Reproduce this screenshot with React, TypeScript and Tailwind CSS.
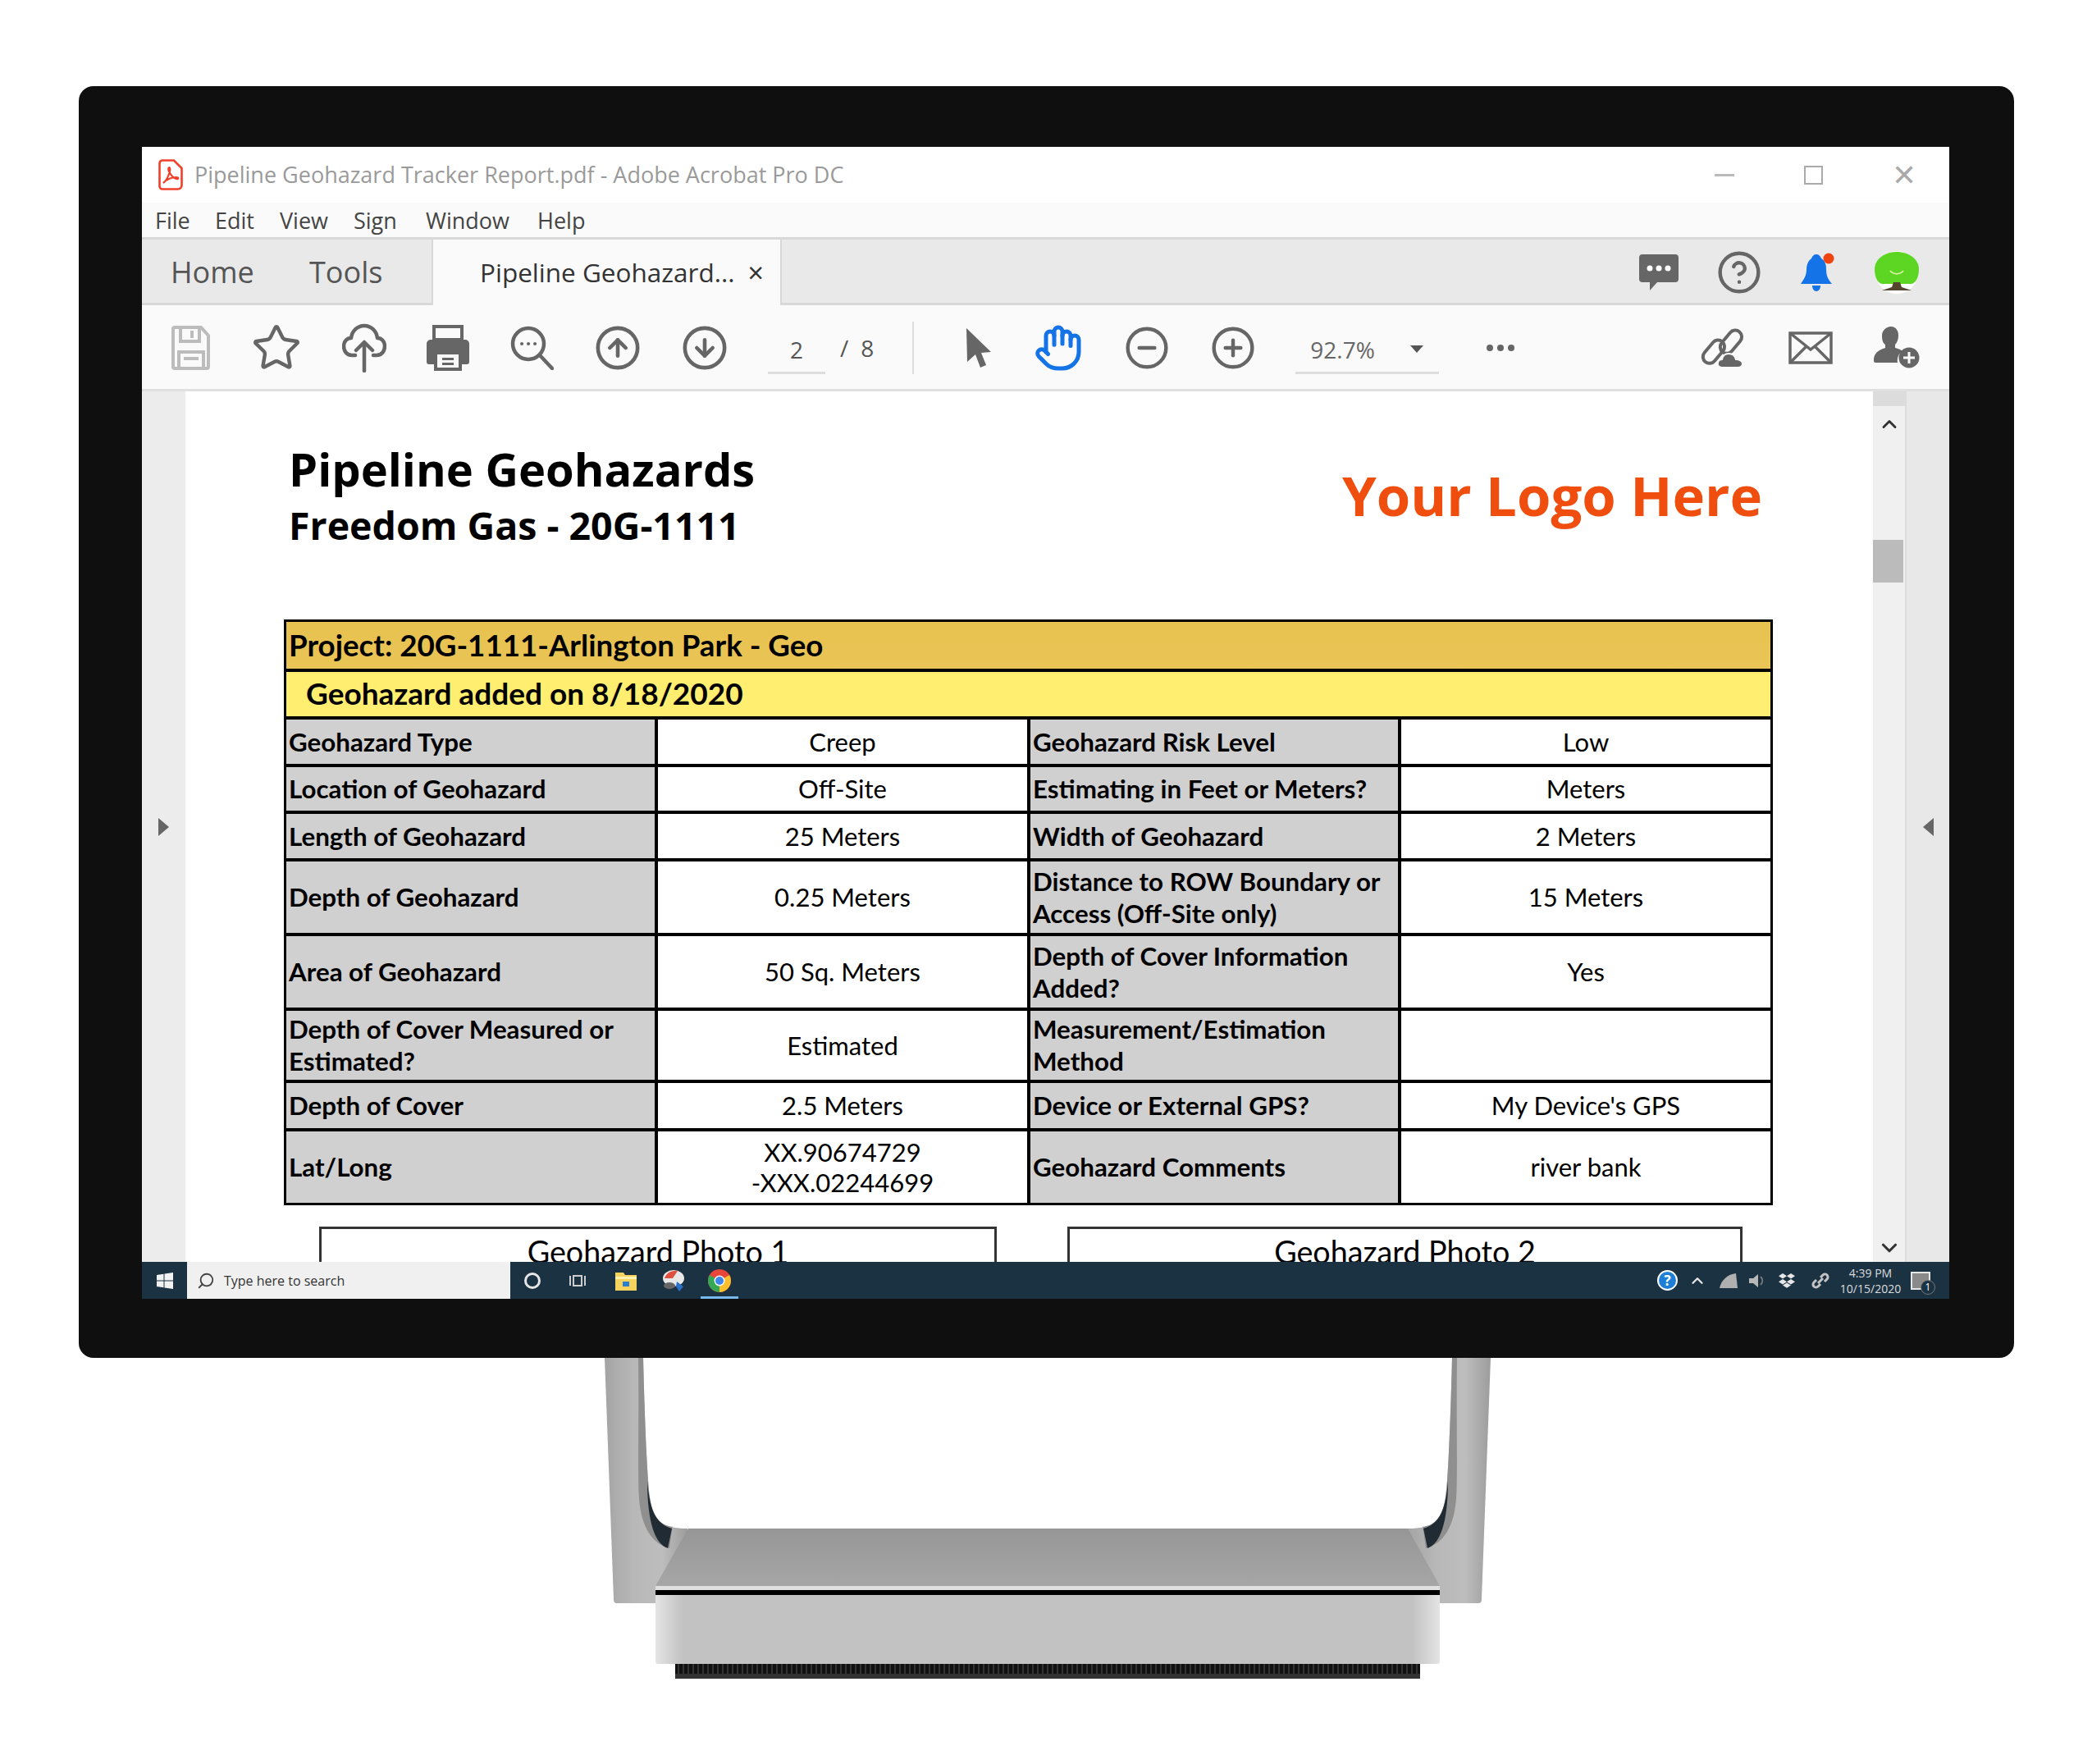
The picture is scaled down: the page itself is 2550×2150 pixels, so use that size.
import React from "react";
import { CircleArrowDown, CircleArrowUp, CircleHelp, CircleMinus, CirclePlus, Hand, Star, ChevronUp, ChevronDown, Search } from "lucide-react";

type Row = { a: string; b: string; c: string; d: string };

const rows: Row[] = [
  { a: "Geohazard Type", b: "Creep", c: "Geohazard Risk Level", d: "Low" },
  { a: "Location of Geohazard", b: "Off-Site", c: "Estimating in Feet or Meters?", d: "Meters" },
  { a: "Length of Geohazard", b: "25 Meters", c: "Width of Geohazard", d: "2 Meters" },
  { a: "Depth of Geohazard", b: "0.25 Meters", c: "Distance to ROW Boundary or\nAccess (Off-Site only)", d: "15 Meters" },
  { a: "Area of Geohazard", b: "50 Sq. Meters", c: "Depth of Cover Information\nAdded?", d: "Yes" },
  { a: "Depth of Cover Measured or\nEstimated?", b: "Estimated", c: "Measurement/Estimation\nMethod", d: "" },
  { a: "Depth of Cover", b: "2.5 Meters", c: "Device or External GPS?", d: "My Device's GPS" },
  { a: "Lat/Long", b: "XX.90674729\n-XXX.02244699", c: "Geohazard Comments", d: "river bank" },
];

const Label = ({ text }: { text: string }) => (
  <div className="flex items-center whitespace-pre-line bg-[#d0d0d0] pl-[3px] text-[31.300px] leading-[39px] font-bold text-black">{text}</div>
);

const Value = ({ text }: { text: string }) => (
  <div className="flex items-center justify-center whitespace-pre-line bg-white text-center text-[31px] leading-[37px] text-black">{text}</div>
);

const PdfLogo = () => (
  <svg width="30" height="38" viewBox="0 0 30 38" fill="none">
    <path d="M5 1.500h14l9.500 9.500V32a4.500 4.500 0 0 1-4.500 4.500H5A3.500 3.500 0 0 1 1.500 33V5A3.500 3.500 0 0 1 5 1.500z" stroke="#f0402a" strokeWidth="2.600" />
    <path d="M6 29c3-2 6-7 8-14 .6-3 .2-5-.8-5s-1.500 2.500-.2 5c2 4 5 8 9 9 3 .6 3-2 0-2-5 0-11 2-16 7z" stroke="#f0402a" strokeWidth="2.200" />
  </svg>
);

const SaveIcon = () => (
  <svg width="50" height="56" viewBox="0 0 50 56" fill="none" stroke="#bcbcbc" strokeWidth="4">
    <path d="M5 3h32l9 10v38a2 2 0 0 1-2 2H5a2 2 0 0 1-2-2V5a2 2 0 0 1 2-2z" />
    <path d="M12 3v17h23V3M26 7v9M10 53V33h30v20M16 41h18" />
  </svg>
);

const CloudIcon = () => (
  <svg width="54" height="60" viewBox="0 0 54 60" fill="none" stroke="#666" strokeWidth="4.500" strokeLinecap="round" strokeLinejoin="round">
    <path d="M16 39H12C5 39 2 33 2 28c0-6 4-10 9-10 1-9 8-15 16-15s15 6 16 15c5 0 9 4 9 10 0 5-3 11-10 11h-4" />
    <path d="M27 58V24M17 33l10-10 10 10" />
  </svg>
);

const PrintIcon = () => (
  <svg width="54" height="56" viewBox="0 0 54 56" fill="#666">
    <path d="M10 2h34v16H10z" fill="none" stroke="#666" strokeWidth="4" />
    <path d="M6 18h42a5 5 0 0 1 5 5v22a3 3 0 0 1-3 3h-6V32H10v16H4a3 3 0 0 1-3-3V23a5 5 0 0 1 5-5z" />
    <path d="M12 34h30v20H12z" fill="none" stroke="#666" strokeWidth="4" />
    <path d="M20 40h14v3H20zM20 46h14v3H20z" />
  </svg>
);

const ZoomIcon = () => (
  <svg width="54" height="54" viewBox="0 0 54 54" fill="none" stroke="#666" strokeWidth="4.500" strokeLinecap="round">
    <circle cx="23" cy="22" r="19" />
    <path d="M37 36l15 16" />
    <path d="M15 22h.1M23 22h.1M31 22h.1" strokeWidth="4" />
  </svg>
);

const ArrowCursor = () => (
  <svg width="34" height="50" viewBox="0 0 34 50" fill="#666">
    <path d="M2 1l30 29-12 1 6 15-7 3-6-16-10 9z" />
  </svg>
);

const LinkCloud = () => (
  <svg width="58" height="50" viewBox="0 0 58 50" fill="none" stroke="#666" strokeWidth="4">
    <rect x="-8" y="-19" width="16" height="32" rx="8" transform="translate(36 20) rotate(40)" />
    <rect x="-8" y="-19" width="16" height="32" rx="8" transform="translate(15 32) rotate(40)" />
    <path d="M27 49c-4 0-6-3-5-6 .5-3 3-4 5-4 1-5 4-7 8-7 5 0 8 3 9 7 4 0 8 2 8 5 0 3-2 5-6 5z" fill="#666" stroke="#fafafa" strokeWidth="2" />
  </svg>
);

const MailIcon = () => (
  <svg width="54" height="40" viewBox="0 0 54 40" fill="none" stroke="#666" strokeWidth="3.500">
    <rect x="2" y="2" width="50" height="36" />
    <path d="M2 2l25 20L52 2M2 38l20-20M52 38L32 18" />
  </svg>
);

const PersonPlus = () => (
  <svg width="56" height="52" viewBox="0 0 56 52" fill="#666">
    <path d="M21 0c6 0 9 5 9 11 0 5-2 9-4 11v4c4 1 7 2 9 4-5 3-7 8-6 14H2c-2 0-2-2-2-4 0-6 4-11 14-14v-4c-3-2-4-6-4-11C10 5 15 0 21 0z" />
    <circle cx="43" cy="38" r="12.500" />
    <path d="M41.500 31h3v5.500H50v3h-5.500V45h-3v-5.500H36v-3h5.500z" fill="#fff" />
  </svg>
);

const ChatIcon = () => (
  <svg width="50" height="46" viewBox="0 0 50 46" fill="#666">
    <path d="M5 1h40a4 4 0 0 1 4 4v26a4 4 0 0 1-4 4H23l-9 10v-10H5a4 4 0 0 1-4-4V5a4 4 0 0 1 4-4z" />
    <circle cx="14" cy="18" r="3.500" fill="#fff" />
    <circle cx="25" cy="18" r="3.500" fill="#fff" />
    <circle cx="36" cy="18" r="3.500" fill="#fff" />
  </svg>
);

const BellIcon = () => (
  <svg width="46" height="50" viewBox="0 0 46 50">
    <path d="M21 3c3 0 5 2 6 5 5 3 6 8 6 13 0 8 2 12 7 18H2c4-6 7-10 7-18 0-5 2-10 6-13 1-3 3-5 6-5z" fill="#1473e6" />
    <path d="M16 41h10c0 4-2 7-5 7s-5-3-5-7z" fill="#1473e6" />
    <circle cx="36" cy="8" r="6.500" fill="#f0440f" />
  </svg>
);

const TreeAvatar = () => (
  <svg width="56" height="52" viewBox="0 0 56 52">
    <circle cx="28" cy="26" r="26" fill="#fff" />
    <path d="M1 22C1 10 13 1 28 1s27 9 27 21c0 10-4 18-10 18H11C5 40 1 32 1 22z" fill="#5cd622" />
    <path d="M24 38h8l2 6 12 4H10l12-4z" fill="#54462e" />
    <path d="M20 24c4 5 12 5 16 0" fill="none" stroke="#d6f0a0" strokeWidth="2" />
  </svg>
);

const WinLogo = () => (
  <svg width="20" height="20" viewBox="0 0 20 20" fill="#f2f2f2">
    <path d="M0 3l8.500-1.200v7.600H0zM9.500 1.600L20 0v9.400H9.500zM0 10.600h8.500v7.600L0 17zM9.500 10.600H20V20l-10.500-1.500z" />
  </svg>
);

const TaskView = () => (
  <svg width="20" height="20" viewBox="0 0 20 20" fill="none" stroke="#ccc" strokeWidth="2">
    <rect x="5" y="4" width="10" height="12" />
    <path d="M1 4v12M19 4v12" />
  </svg>
);

const Explorer = () => (
  <svg width="26" height="24" viewBox="0 0 26 24">
    <path d="M0 2h10l2 3h14v19H0z" fill="#f6d35c" />
    <path d="M0 7h26v3H0z" fill="#fff2b0" />
    <path d="M9 13h8v6H9z" fill="#2a7fd0" />
  </svg>
);

const PaintApp = () => (
  <svg width="30" height="30" viewBox="0 0 30 30">
    <ellipse cx="15" cy="12" rx="13" ry="10" fill="#e8e8e8" />
    <path d="M4 12c2-6 8-10 16-9l-6 9z" fill="#e05040" />
    <ellipse cx="10" cy="21" rx="7" ry="4" fill="#666" />
    <path d="M19 16l8 6-5 6-4-6z" fill="#2a6fc8" />
  </svg>
);

const ChromeIcon = () => (
  <svg width="28" height="28" viewBox="0 0 28 28">
    <circle cx="14" cy="14" r="14" fill="#e8463a" />
    <path d="M14 14L1.900 7A14 14 0 0 0 14 28z" fill="#34a853" />
    <path d="M14 14v14A14 14 0 0 0 26.100 7z" fill="#fbc02d" />
    <circle cx="14" cy="14" r="6.500" fill="#fff" />
    <circle cx="14" cy="14" r="5" fill="#3f86ea" />
  </svg>
);

const TrayDropbox = () => (
  <svg width="20" height="18" viewBox="0 0 20 18" fill="#e6e6e6">
    <path d="M5 0l5 3.300L5 6.600 0 3.300zM15 0l5 3.300-5 3.300-5-3.300zM5 7l5 3.300-5 3.300L0 10.300zM15 7l5 3.300-5 3.300-5-3.300zM5 14.500l5-3 5 3-5 3.300z" />
  </svg>
);

// the monitor stand, drawn as one picture
const Stand = () => (
  <svg width="1090" height="391" viewBox="0 0 1090 391" className="ml-[737px] block">
    <defs>
      <linearGradient id="legL" x1="0" x2="1" y1="0" y2="0">
        <stop offset="0" stopColor="#a4a4a4" />
        <stop offset="0.35" stopColor="#b8b8b8" />
        <stop offset="0.7" stopColor="#bdbdbd" />
        <stop offset="1" stopColor="#9c9c9c" />
      </linearGradient>
      <linearGradient id="body" x1="0" x2="1" y1="0" y2="0">
        <stop offset="0" stopColor="#e4e4e4" />
        <stop offset="0.035" stopColor="#c2c2c2" />
        <stop offset="0.965" stopColor="#c2c2c2" />
        <stop offset="1" stopColor="#e4e4e4" />
      </linearGradient>
      <linearGradient id="plate" x1="0" x2="0" y1="0" y2="1">
        <stop offset="0" stopColor="#969696" />
        <stop offset="1" stopColor="#a6a6a6" />
      </linearGradient>
      <pattern id="vent" width="6" height="20" patternUnits="userSpaceOnUse">
        <rect width="6" height="20" fill="#333" />
        <rect x="1" width="4" height="20" fill="#111" />
      </pattern>
    </defs>
    <path d="M0 0h47c2 80 5 150 8 170 5 30 16 38 46 38v91H15c-3 0-4-2-4-5z" fill="url(#legL)" />
    <path d="M1080 0h-47c-2 80-5 150-8 170-5 30-16 38-46 38v91h86c3 0 4-2 4-5z" fill="url(#legL)" />
    <path d="M41 0h6c2 80 5 150 8 170 3 24 12 34 28 36v-2l-4 28c-22-6-34-26-37-60-2-30-0-100-1-172z" fill="#8f8f8f" />
    <path d="M1039 0h-6c-2 80-5 150-8 170-3 24-12 34-28 36v-2l4 28c22-6 34-26 37-60 2-30 0-100 1-172z" fill="#8f8f8f" />
    <path d="M52 150c3 35 10 52 30 58l-5 24c-15-5-25-30-25-82z" fill="#202b33" />
    <path d="M1028 150c-3 35-10 52-30 58l5 24c15-5 25-30 25-82z" fill="#202b33" />
    <path d="M102 208h877l39 70H62z" fill="url(#plate)" />
    <path d="M62 278h956v5H62z" fill="#e0e0e0" />
    <path d="M62 283h956v6H62z" fill="#000" />
    <path d="M62 289h956v81a3 3 0 0 1-3 3H65a3 3 0 0 1-3-3z" fill="url(#body)" />
    <path d="M86 373h908v12H86z" fill="url(#vent)" />
    <path d="M86 385h908v6H86z" fill="#333" />
  </svg>
);

export default function App() {
  return (
    <div className="h-[2150px] w-[2550px] bg-white pt-[105px] font-['Open_Sans',sans-serif]">
      <div className="ml-[96px] h-[1550px] w-[2359px] rounded-[18px] bg-[#0f0f0f] pt-[74px] pl-[77px]">
        <div className="flex h-[1404px] w-[2203px] flex-col overflow-hidden bg-white">
          {/* title bar */}
          <div className="flex h-[68px] shrink-0 items-center pl-[20px]">
            <PdfLogo />
            <span className="ml-[14px] text-[27px] text-[#9a9a9a]">Pipeline Geohazard Tracker Report.pdf - Adobe Acrobat Pro DC</span>
            <div className="ml-auto flex items-center pr-[40px]">
              <div className="h-[3px] w-[24px] bg-[#bbb]" />
              <div className="ml-[85px] h-[23px] w-[23px] border-2 border-[#aaa]" />
              <span className="ml-[84px] text-[36px] leading-none font-light text-[#aaa]">✕</span>
            </div>
          </div>
          {/* menu */}
          <div className="flex h-[45px] shrink-0 items-center border-b-[3px] border-[#d8d8d8] bg-[#fafafa] pt-[2px] pl-[16px] text-[27px] text-[#444]">
            <span className="w-[73px]">File</span>
            <span className="w-[79px]">Edit</span>
            <span className="w-[90px]">View</span>
            <span className="w-[88px]">Sign</span>
            <span className="w-[136px]">Window</span>
            <span>Help</span>
          </div>
          {/* tabs */}
          <div className="flex h-[80px] shrink-0 border-b-[3px] border-[#d8d8d8] bg-[#e9e9e9] pt-[2px]">
            <div className="flex items-center pl-[35px] text-[36px] text-[#555]">
              <span className="w-[169px]">Home</span>
              <span className="w-[149px]">Tools</span>
            </div>
            <div className="-mt-[2px] -mb-[3px] flex w-[427px] items-center border-x-2 border-[#d8d8d8] bg-[#fafafa] pl-[57px] text-[31.500px] text-[#333]">
              <span>Pipeline Geohazard...</span>
              <span className="ml-[16px] text-[34px] leading-none">×</span>
            </div>
            <div className="ml-auto flex items-center gap-[45px] pr-[36px]">
              <ChatIcon />
              <CircleHelp size={56} color="#666" strokeWidth={1.900} />
              <BellIcon />
              <TreeAvatar />
            </div>
          </div>
          {/* toolbar */}
          <div className="flex h-[105px] shrink-0 items-center border-b-[3px] border-[#e0e0e0] bg-[#fafafa] pt-[2px] pl-[35px]">
            <div className="flex w-[680px] items-center justify-between">
              <SaveIcon />
              <Star size={62} color="#666" strokeWidth={1.700} />
              <CloudIcon />
              <PrintIcon />
              <ZoomIcon />
              <CircleArrowUp size={58} color="#666" strokeWidth={1.900} />
              <CircleArrowDown size={58} color="#666" strokeWidth={1.900} />
            </div>
            <div className="mt-[12px] ml-[48px] w-[70px] border-b-[3px] border-[#ddd] pb-[6px] text-center text-[28px] text-[#555]">2</div>
            <span className="ml-[18px] text-[28px] text-[#555]">/</span>
            <span className="ml-[15px] text-[28px] text-[#555]">8</span>
            <div className="ml-[47px] h-[64px] w-[2px] bg-[#ddd]" />
            <div className="ml-[62px] flex w-[355px] items-center justify-between">
              <ArrowCursor />
              <Hand size={60} color="#1473e6" strokeWidth={2} />
              <CircleMinus size={56} color="#666" strokeWidth={1.900} />
              <CirclePlus size={56} color="#666" strokeWidth={1.900} />
            </div>
            <div className="mt-[12px] ml-[48px] flex w-[175px] items-center border-b-[3px] border-[#ddd] pb-[6px] pl-[18px] text-[28px] text-[#666]">
              <span>92.7%</span>
              <span className="ml-[43px] h-0 w-0 border-x-[8px] border-t-[9px] border-x-transparent border-t-[#555]" />
            </div>
            <div className="ml-[58px] flex gap-[5px]">
              <div className="h-[8px] w-[8px] rounded-full bg-[#666]" />
              <div className="h-[8px] w-[8px] rounded-full bg-[#666]" />
              <div className="h-[8px] w-[8px] rounded-full bg-[#666]" />
            </div>
            <div className="ml-auto flex items-center gap-[50px] pr-[36px]">
              <LinkCloud />
              <MailIcon />
              <PersonPlus />
            </div>
          </div>
          {/* document area */}
          <div className="flex min-h-0 flex-1">
            <div className="flex w-[53px] shrink-0 items-center justify-center bg-[#ececec]">
              <div className="h-0 w-0 border-y-[11px] border-l-[13px] border-y-transparent border-l-[#666]" />
            </div>
            <div className="min-w-0 flex-1 overflow-hidden bg-white pl-[120px]">
              <div className="flex h-[278px] w-[1815px] items-start">
                <div className="pt-[56px] pl-[6px] text-black">
                  <div className="text-[56px] leading-[76px] font-bold">Pipeline Geohazards</div>
                  <div className="text-[46.500px] leading-[62px] font-bold">Freedom Gas - 20G-1111</div>
                </div>
                <div className="mt-[81px] ml-auto pr-[13px] text-[67px] leading-[90px] font-bold text-[#f04e0f]">Your Logo Here</div>
              </div>
              {/* report table */}
              <div className="w-[1815px] bg-black p-[3px] font-['Lato',sans-serif]">
                <div className="flex h-[57px] items-center bg-gradient-to-b from-[#e8c24f] to-[#e9c557] pl-[3px] text-[36.700px] font-bold text-black">
                  Project: 20G-1111-Arlington Park - Geo
                </div>
                <div className="mt-[4px] flex h-[54px] items-center bg-[#ffee70] pb-[2px] pl-[24px] text-[37px] font-bold text-black">
                  Geohazard added on 8/18/2020
                </div>
                <div className="mt-[4px] grid grid-cols-[449px_450px_448px_1fr] grid-rows-[54px_53px_54px_87px_87px_84px_55px_87px] gap-[4px]">
                  {rows.map((r) => (
                    <React.Fragment key={r.a}>
                      <Label text={r.a} />
                      <Value text={r.b} />
                      <Label text={r.c} />
                      <Value text={r.d} />
                    </React.Fragment>
                  ))}
                </div>
              </div>
              {/* photo boxes, cut by the window edge */}
              <div className="mt-[26px] ml-[43px] flex gap-[86px] font-['Lato',sans-serif] text-[37.700px] text-black">
                <div className="h-[80px] w-[826px] border-[3px] border-[#333] text-center">Geohazard Photo 1</div>
                <div className="h-[80px] w-[823px] border-[3px] border-[#333] text-center">Geohazard Photo 2</div>
              </div>
            </div>
            <div className="flex w-[41px] shrink-0 flex-col items-center border-r-2 border-[#dcdcdc] bg-[#f0f0f0]">
              <div className="h-[18px] w-full bg-[#dcdcdc]" />
              <ChevronUp size={28} color="#333" strokeWidth={2.500} className="mt-[8px]" />
              <div className="mt-[127px] h-[52px] w-[37px] self-start bg-[#bbbbbb]" />
              <ChevronDown size={30} color="#333" strokeWidth={2.500} className="mt-auto mb-[2px]" />
            </div>
            <div className="flex w-[52px] shrink-0 items-center justify-center bg-[#e8e8e8]">
              <div className="h-0 w-0 border-y-[11px] border-r-[13px] border-y-transparent border-r-[#666]" />
            </div>
          </div>
          {/* windows taskbar */}
          <div className="flex h-[45px] shrink-0 items-center bg-[#1b3243] font-['Open_Sans',sans-serif]">
            <div className="flex w-[55px] shrink-0 justify-center">
              <WinLogo />
            </div>
            <div className="flex h-full w-[394px] items-center bg-[#f0f0f0] pl-[12px] text-[#333]">
              <Search size={22} color="#444" strokeWidth={2} className="-scale-x-100" />
              <span className="ml-[11px] text-[16px]">Type here to search</span>
            </div>
            <div className="ml-[17px] h-[20px] w-[20px] rounded-full border-[3px] border-[#e6e6e6]" />
            <div className="ml-[35px]"><TaskView /></div>
            <div className="ml-[36px]"><Explorer /></div>
            <div className="ml-[30px]"><PaintApp /></div>
            <div className="relative ml-[18px] flex h-full w-[46px] items-center justify-center">
              <ChromeIcon />
              <div className="absolute right-0 bottom-0 left-0 h-[3px] bg-[#76b9ed]" />
            </div>
            <div className="ml-auto flex items-center pr-[23px]">
              <div className="flex h-[25px] w-[25px] items-center justify-center rounded-full border-2 border-white bg-[#1f7fd6] text-[17px] leading-none font-bold text-white">?</div>
              <ChevronUp size={22} color="#e6e6e6" strokeWidth={2.500} className="ml-[13px]" />
              <svg width="22" height="18" viewBox="0 0 22 18" className="ml-[16px]" fill="#b0b0b0"><path d="M0 18C2 8 10 1 20 0l2 18z" /></svg>
              <svg width="22" height="18" viewBox="0 0 22 18" className="ml-[14px]" fill="#b8b8b8"><path d="M0 6h5l6-5v16l-6-5H0z" /><path d="M14 4c3 3 3 7 0 10" fill="none" stroke="#777" strokeWidth="2" /></svg>
              <div className="ml-[14px]"><TrayDropbox /></div>
              <svg width="22" height="22" viewBox="0 0 22 22" className="ml-[20px]" fill="none" stroke="#c4c4c4" strokeWidth="3"><path d="M8 14l6-6M6 10l-3 3a3.500 3.500 0 0 0 5 5l3-3M16 12l3-3a3.500 3.500 0 0 0-5-5l-3 3" /></svg>
              <div className="ml-[10px] w-[80px] text-center text-[14px] leading-[19px] text-[#ddd]">
                <div>4:39 PM</div>
                <div>10/15/2020</div>
              </div>
              <div className="relative ml-[9px] h-[22px] w-[24px] border-2 border-[#e6e6e6] bg-[#8a8a8a]">
                <span className="absolute -right-[8px] -bottom-[8px] flex h-[18px] w-[18px] items-center justify-center rounded-full border border-[#777] bg-[#1b3243] text-[12px] leading-none text-white">1</span>
              </div>
            </div>
          </div>
        </div>
      </div>
      <Stand />
    </div>
  );
}
